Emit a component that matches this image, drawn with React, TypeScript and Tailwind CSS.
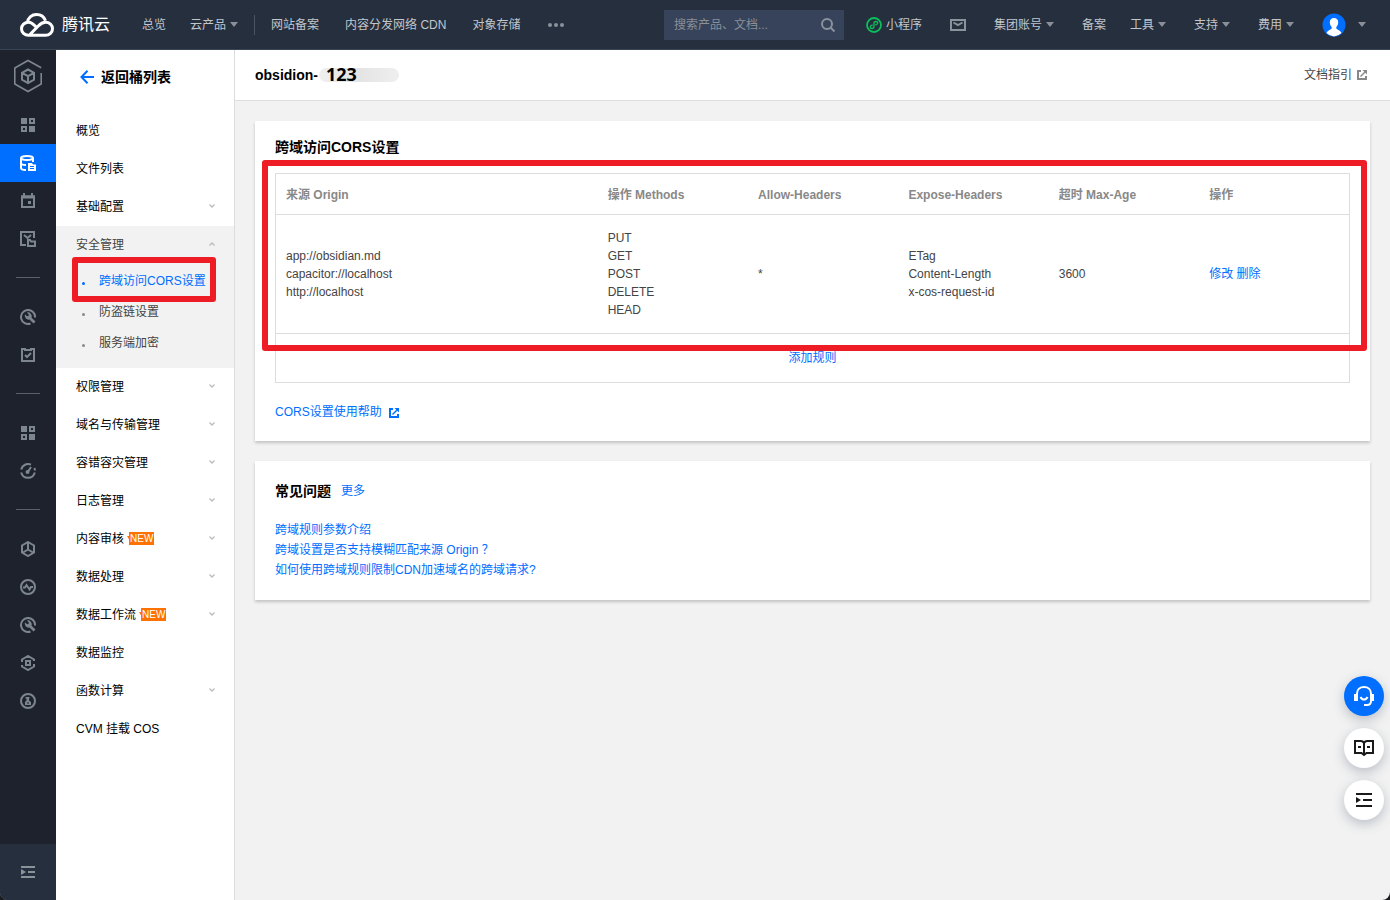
import React from 'react';
import clsx from 'clsx';

type IconName =
  | 'grid'
  | 'bucket'
  | 'calendar'
  | 'image'
  | 'wrench'
  | 'task'
  | 'gauge'
  | 'cube'
  | 'pulse'
  | 'hex'
  | 'lab'
  | 'indent';

interface MenuItem {
  label: string;
  expandable?: boolean;
  open?: boolean;
  isNew?: boolean;
  children?: { label: string; active?: boolean }[];
}

const railGroups: { icon: IconName; title: string; active?: boolean }[][] = [
  [
    { icon: 'grid', title: '概览' },
    { icon: 'bucket', title: '存储桶列表', active: true },
    { icon: 'calendar', title: '日志' },
    { icon: 'image', title: '数据万象' },
  ],
  [
    { icon: 'wrench', title: '工具' },
    { icon: 'task', title: '任务' },
  ],
  [
    { icon: 'grid', title: '应用' },
    { icon: 'gauge', title: '监控' },
  ],
  [
    { icon: 'cube', title: '资源包' },
    { icon: 'pulse', title: '诊断' },
    { icon: 'wrench', title: '工具箱' },
    { icon: 'hex', title: '服务' },
    { icon: 'lab', title: '实验室' },
  ],
];

const menuItems: MenuItem[] = [
  { label: '概览' },
  { label: '文件列表' },
  { label: '基础配置', expandable: true },
  {
    label: '安全管理',
    expandable: true,
    open: true,
    children: [
      { label: '跨域访问CORS设置', active: true },
      { label: '防盗链设置' },
      { label: '服务端加密' },
    ],
  },
  { label: '权限管理', expandable: true },
  { label: '域名与传输管理', expandable: true },
  { label: '容错容灾管理', expandable: true },
  { label: '日志管理', expandable: true },
  { label: '内容审核', expandable: true, isNew: true },
  { label: '数据处理', expandable: true },
  { label: '数据工作流', expandable: true, isNew: true },
  { label: '数据监控' },
  { label: '函数计算', expandable: true },
  { label: 'CVM 挂载 COS' },
];

const rules = [
  {
    origins: ['app://obsidian.md', 'capacitor://localhost', 'http://localhost'],
    methods: ['PUT', 'GET', 'POST', 'DELETE', 'HEAD'],
    allowHeaders: ['*'],
    exposeHeaders: ['ETag', 'Content-Length', 'x-cos-request-id'],
    maxAge: 3600,
  },
];

const faqs = [
  '跨域规则参数介绍',
  '跨域设置是否支持模糊匹配来源 Origin ？',
  '如何使用跨域规则限制CDN加速域名的跨域请求?',
];

const iconShapes: Record<IconName, React.ReactNode> = {
  grid: (
    <>
      <path fill="currentColor" stroke="none" d="M1 1h6v6H1zM9 9h6v6H9z" />
      <path d="M10 2h4v4h-4zM2 10h4v4H2z" />
    </>
  ),
  bucket: (
    <>
      <ellipse cx="7" cy="3" rx="6" ry="2" />
      <path d="M1 3v10c0 1.200 2 2 5 2M13 3v4M1 8c0 1.200 2 2 5 2" />
      <path fill="currentColor" stroke="none" fillRule="evenodd" d="M8 8h4l1 1.500h3V16H8zM10 11v1h4v-1zM10 13v1h4v-1z" />
    </>
  ),
  calendar: (
    <>
      <path d="M2 3.500h12V14H2z" />
      <path strokeWidth="3" d="M1 4h14" />
      <path d="M4 0v4M12 0v4" />
      <path fill="currentColor" stroke="none" d="M8 8h3v3H8z" />
    </>
  ),
  image: (
    <>
      <path d="M6 14H1V1h13v6" />
      <path d="M4 4l3.500 3L11 4" />
      <path d="M8 9h2l1 1.500h4V15H8z" />
    </>
  ),
  wrench: (
    <>
      <path d="M10.500 14.500A7 7 0 1 1 15 8.500" />
      <path
        fill="currentColor"
        stroke="none"
        d="M5 5.200l2 2 1.500-.3.300-1.500-1.900-1.900a4 4 0 0 1 4.700 5.200l3.900 3.900-2 2-4-4A4 4 0 0 1 5 5.200z"
      />
    </>
  ),
  task: (
    <>
      <path d="M5 2H2v12h12V2h-3" />
      <path d="M5 1v2h6V1M5 8l2 2 4-4" />
    </>
  ),
  gauge: (
    <>
      <path d="M1.200 6.500A7 7 0 0 1 11 1.700M14.300 5A7 7 0 0 1 15 7.500M1.200 9.500a7 7 0 0 0 13.600 0" />
      <path d="M7.500 9.500L11 4" />
      <circle cx="7.500" cy="9" r="1" fill="currentColor" />
    </>
  ),
  cube: (
    <>
      <path d="M8 1l6 3.500v7L8 15l-6-3.500v-7z" />
      <path d="M8 2v6.500M8 8.500l-5 3M8 8.500l5 3" />
    </>
  ),
  pulse: (
    <>
      <circle cx="8" cy="8" r="7" />
      <path d="M3 8.500h2L6.500 6l3 4.500L11 8h2" />
    </>
  ),
  hex: (
    <>
      <path d="M2 7V4.500L8 1l6 3.500V6M14 9v2.500L8 15l-6-3.500V10" />
      <path d="M6 6h4v4H6z" />
    </>
  ),
  lab: (
    <>
      <circle cx="8" cy="8" r="7" />
      <path
        fill="currentColor"
        stroke="none"
        fillRule="evenodd"
        d="M5.500 4h4v1.500H9v2l2 1.500v3H5V9l1.500-1.500v-2h-1zM7 9.500h2v1H7z"
      />
    </>
  ),
  indent: (
    <>
      <path d="M1 3h14M8 8h7M1 13h14" />
      <path fill="currentColor" stroke="none" d="M1 5l5 3-5 3z" />
    </>
  ),
};

const Icon: React.FC<{ name: IconName; className?: string }> = ({ name, className }) => (
  <svg viewBox="0 0 16 16" fill="none" stroke="currentColor" strokeWidth="2" className={clsx('h-4 w-4', className)}>
    {iconShapes[name]}
  </svg>
);

const Caret = () => (
  <svg viewBox="0 0 8 5" className="h-[5px] w-2 fill-[#8a8f98]">
    <path d="M0 0h8L4 5z" />
  </svg>
);

const ExternalIcon: React.FC<{ className?: string }> = ({ className }) => (
  <svg viewBox="0 0 10 10" fill="none" stroke="currentColor" strokeWidth="2" className={clsx('h-[10px] w-[10px]', className)}>
    <path d="M4 1H1v8h8V6" />
    <path strokeWidth="1.500" d="M3.500 6.500L8.500 1.500" />
    <path fill="currentColor" stroke="none" d="M5.500 0H10v4.500z" />
  </svg>
);

const NavLink: React.FC<{ label: string; caret?: boolean }> = ({ label, caret }) => (
  <a href="#" className="flex items-center gap-1 whitespace-nowrap">
    {label}
    {caret && <Caret />}
  </a>
);

const TopBar = () => (
  <header className="flex h-[50px] shrink-0 items-center border-b border-[#3a4554] bg-[#262f3e] pr-6 pl-5 text-[#c1c6cd]">
    <a href="#" className="flex items-center gap-2 text-base whitespace-nowrap text-white">
      <svg viewBox="0 0 34 24" fill="none" stroke="currentColor" strokeWidth="3" className="h-6 w-[34px]">
        <path d="M7.500 9.500C8 4.500 12 1.500 16.500 1.500c4.300 0 7.700 2.500 9 6.300" />
        <path d="M16.500 14.500C14 11.500 11.500 9.200 8.500 9.200c-4 0-7 3-7 6.600 0 3.700 3 6.500 7 6.500h17c4 0 7-3 7-6.600s-3-6.500-7-6.500c-3 0-5 1.300-7.500 4L10 21.500" />
      </svg>
      腾讯云
    </a>
    <nav className="ml-8 flex items-center">
      <NavLink label="总览" />
      <div className="ml-6">
        <NavLink label="云产品" caret />
      </div>
      <span className="mx-4 h-5 w-px bg-[#4a5361]" />
      <div className="flex items-center gap-[26px]">
        <NavLink label="网站备案" />
        <NavLink label="内容分发网络 CDN" />
        <NavLink label="对象存储" />
        <button aria-label="更多产品" className="ml-[2px] flex gap-[2px]">
          <span className="h-1 w-1 rounded-full bg-[#8a929b]" />
          <span className="h-1 w-1 rounded-full bg-[#8a929b]" />
          <span className="h-1 w-1 rounded-full bg-[#8a929b]" />
        </button>
      </div>
    </nav>

    <div className="ml-auto flex items-center">
      <div className="flex h-[30px] w-[180px] items-center bg-[#36435a] pr-2 pl-[10px]">
        <input
          type="text"
          aria-label="搜索"
          placeholder="搜索产品、文档..."
          className="min-w-0 flex-1 bg-transparent placeholder:text-[#8a8f98] focus:outline-none"
        />
        <svg viewBox="0 0 16 16" fill="none" stroke="#8a929b" strokeWidth="2" className="h-4 w-4">
          <circle cx="7" cy="7" r="5" />
          <path d="M10.500 10.500l4 4" />
        </svg>
      </div>
      <a href="#" className="ml-[22px] flex items-center gap-1 whitespace-nowrap">
        <svg viewBox="0 0 16 16" fill="none" stroke="#0abf5b" className="h-4 w-4">
          <circle cx="8" cy="8" r="7" strokeWidth="1.800" />
          <path
            strokeWidth="1.300"
            strokeLinecap="round"
            d="M6.300 8.200c-1.300.2-2 .9-2 1.700 0 1 .8 1.600 1.800 1.600 1.200 0 1.900-.8 1.900-1.900V6.400c0-1.100.7-1.900 1.900-1.900 1 0 1.800.6 1.800 1.600 0 .8-.7 1.500-2 1.700"
          />
        </svg>
        小程序
      </a>
      <button aria-label="消息" className="ml-7">
        <svg viewBox="0 0 16 12" fill="none" stroke="#8a929b" strokeWidth="2" className="h-3 w-4">
          <path d="M1 1h14v10H1z" />
          <path d="M3.500 3.500L8 6l4.500-2.500" />
        </svg>
      </button>
      <div className="ml-7 flex items-center gap-7">
        <NavLink label="集团账号" caret />
        <div className="flex items-center gap-6">
          <NavLink label="备案" />
          <NavLink label="工具" caret />
        </div>
        <NavLink label="支持" caret />
        <NavLink label="费用" caret />
        <button aria-label="账号" className="flex items-center gap-3">
          <svg viewBox="0 0 24 24" className="h-6 w-6">
            <circle cx="12" cy="12" r="11.500" fill="#006eff" />
            <path
              fill="#fff"
              d="M12 5c2.600 0 4.200 1.700 4.200 4.300 0 2.100-.8 3.700-1.900 4.600v1.400c0 1.200 4 1.800 5.200 4.700A11.400 11.400 0 0 1 12 23.500 11.400 11.400 0 0 1 4.500 20c1.200-2.900 5.200-3.500 5.200-4.700v-1.400c-1.100-.9-1.900-2.500-1.900-4.600C7.800 6.700 9.400 5 12 5z"
            />
          </svg>
          <Caret />
        </button>
      </div>
    </div>
  </header>
);

const Rail = () => (
  <aside className="flex w-14 shrink-0 flex-col bg-[#1e222d] text-[#7d868f]">
    <div className="flex h-14 items-center justify-center pb-1">
      <svg viewBox="0 0 30 34" fill="none" stroke="currentColor" strokeWidth="1.600" className="h-[34px] w-[30px]">
        <path d="M28.200 14v11L15 32.500 1.800 25V9L15 1.500l13.200 7.300" />
        <path strokeWidth="2" d="M15 10.500l6 3.300v6.800l-6 3.400-6-3.400v-6.800zM9 13.800l6 3.400 6-3.400M15 17.200V24" />
      </svg>
    </div>
    {railGroups.map((group, i) => (
      <div key={i}>
        {i > 0 && (
          <div className="flex h-10 items-center justify-center pb-[2px]">
            <hr className="w-6 border-[#5b616b]" />
          </div>
        )}
        {group.map((item, j) => (
          <button
            key={j}
            aria-label={item.title}
            className={clsx('flex h-[38px] w-full items-center justify-center', item.active && 'bg-[#006eff] text-white')}
          >
            <Icon name={item.icon} />
          </button>
        ))}
      </div>
    ))}
    <button aria-label="展开导航" className="mt-auto flex h-14 items-center justify-center bg-[#262f3e] text-[#88939a]">
      <Icon name="indent" />
    </button>
  </aside>
);

const NewBadge = () => (
  <span className="relative ml-[5px] h-[13px] bg-[#ff7200] px-px text-[10px] leading-[13px] text-white">
    <svg viewBox="0 0 3 5" className="absolute top-1 -left-[2px] h-[5px] w-[3px] fill-[#ff7200]">
      <path d="M0 0h3v5z" />
    </svg>
    NEW
  </span>
);

const SideMenu = () => (
  <nav className="w-[179px] shrink-0 border-r border-[#dddddd] bg-white text-black">
    <a href="#" className="flex h-[62px] items-center gap-[7px] pb-2 pl-6 text-sm font-bold">
      <svg viewBox="0 0 14 14" fill="none" stroke="#006eff" strokeWidth="2" className="h-[14px] w-[14px]">
        <path d="M14 7H1.500M7.500 .8L1.500 7l6 6.200" />
      </svg>
      返回桶列表
    </a>
    <ul>
      {menuItems.map((item) => (
        <li key={item.label} className={clsx(item.open && 'bg-[#f2f2f2]')}>
          <a href="#" className={clsx('flex h-[38px] items-center pr-[19px] pb-px pl-5', item.open && 'text-[#444444]')}>
            {item.label}
            {item.isNew && <NewBadge />}
            {item.expandable && (
              <svg
                viewBox="0 0 6 4"
                fill="none"
                stroke="#bbbbbb"
                strokeWidth="1.300"
                className={clsx('mb-px ml-auto h-1 w-[6px]', item.open && 'rotate-180')}
              >
                <path d="M.5.500L3 3 5.500.500" />
              </svg>
            )}
          </a>
          {item.children && (
            <ul className="pt-[2px] pb-[9px]">
              {item.children.map((child) => (
                <li key={child.label} className="relative">
                  <a
                    href="#"
                    className={clsx(
                      'flex h-[31px] items-center gap-[14px] pb-[2px] pl-[26px]',
                      child.active ? 'text-[#006eff]' : 'text-[#444444]'
                    )}
                  >
                    <span className={clsx('mt-[6px] h-[3px] w-[3px] rounded-full', child.active ? 'bg-[#006eff]' : 'bg-[#888888]')} />
                    {child.label}
                  </a>
                  {child.active && (
                    <span className="pointer-events-none absolute -top-[9px] right-[18px] left-4 h-[45px] rounded-[3px] border-[6px] border-[#ee1c25]" />
                  )}
                </li>
              ))}
            </ul>
          )}
        </li>
      ))}
    </ul>
  </nav>
);

const Lines: React.FC<{ items: string[] }> = ({ items }) => (
  <>
    {items.map((item) => (
      <div key={item}>{item}</div>
    ))}
  </>
);

const CorsCard = () => (
  <section className="bg-white px-5 pt-4 pb-5 shadow-[0_2px_3px_rgba(0,0,0,0.2)]">
    <h2 className="text-sm leading-5 font-bold text-black">跨域访问CORS设置</h2>
    <div className="relative mt-4">
      <table className="w-full table-fixed border-collapse text-left leading-[18px] text-[#444444]">
        <thead className="text-[#888888]">
          <tr className="h-[41px] border border-[#dddddd]">
            <th className="w-[30%] px-[10px] pt-[2px]">来源 Origin</th>
            <th className="w-[14%] px-[10px] pt-[2px]">操作 Methods</th>
            <th className="w-[14%] px-[10px] pt-[2px]">Allow-Headers</th>
            <th className="w-[14%] px-[10px] pt-[2px]">Expose-Headers</th>
            <th className="w-[14%] px-[10px] pt-[2px]">超时 Max-Age</th>
            <th className="w-[14%] px-[10px] pt-[2px]">操作</th>
          </tr>
        </thead>
        <tbody>
          {rules.map((rule, i) => (
            <tr key={i} className="border border-[#dddddd]">
              <td className="px-[10px] py-[14px]">
                <Lines items={rule.origins} />
              </td>
              <td className="px-[10px] py-[14px]">
                <Lines items={rule.methods} />
              </td>
              <td className="px-[10px] py-[14px]">
                <Lines items={rule.allowHeaders} />
              </td>
              <td className="px-[10px] py-[14px]">
                <Lines items={rule.exposeHeaders} />
              </td>
              <td className="px-[10px] py-[14px]">{rule.maxAge}</td>
              <td className="px-[10px] py-[14px] whitespace-nowrap text-[#006eff]">
                <button>修改</button> <button>删除</button>
              </td>
            </tr>
          ))}
          <tr className="h-[49px] border border-[#dddddd]">
            <td colSpan={6} className="text-center text-[#006eff]">
              <button>添加规则</button>
            </td>
          </tr>
        </tbody>
      </table>
      <span className="pointer-events-none absolute -top-[13px] -right-[17px] bottom-8 -left-[13px] rounded-[3px] border-[6px] border-[#ee1c25]" />
    </div>
    <a href="#" className="mt-5 flex items-center gap-[7px] leading-[18px] text-[#006eff]">
      CORS设置使用帮助
      <ExternalIcon className="mt-[2px]" />
    </a>
  </section>
);

const FaqCard = () => (
  <section className="bg-white p-5 shadow-[0_2px_3px_rgba(0,0,0,0.2)]">
    <div className="flex items-center gap-[10px] leading-5">
      <h2 className="text-sm leading-5 font-bold text-black">常见问题</h2>
      <a href="#" className="text-[#006eff]">
        更多
      </a>
    </div>
    <ul className="mt-[19px] leading-5 text-[#006eff]">
      {faqs.map((faq) => (
        <li key={faq}>
          <a href="#">{faq}</a>
        </li>
      ))}
    </ul>
  </section>
);

const FloatingTools = () => (
  <div className="fixed right-[6px] bottom-20 flex flex-col gap-3 text-[#1a1a1a]">
    <button
      aria-label="在线客服"
      className="flex h-10 w-10 items-center justify-center rounded-full bg-[#006eff] text-white shadow-[0_4px_12px_rgba(55,72,100,0.3)]"
    >
      <svg viewBox="0 0 20 20" fill="none" stroke="currentColor" strokeWidth="2" className="h-5 w-5">
        <path d="M3 9V7.500C3 3.500 6 1 10 1s7 2.500 7 6.500V15c0 2.500-1.500 4-4 4h-3" />
        <path fill="currentColor" stroke="none" d="M0 8h4v7H0zM16 8h4v7h-4z" />
        <path d="M6.500 11c.8 1.800 2 2.500 3.500 2.500s2.700-.7 3.500-2.500" />
      </svg>
    </button>
    <button
      aria-label="文档"
      className="flex h-10 w-10 items-center justify-center rounded-full bg-white shadow-[0_4px_12px_rgba(55,72,100,0.3)]"
    >
      <svg viewBox="0 0 20 18" fill="none" stroke="currentColor" strokeWidth="2" className="h-[18px] w-5">
        <path d="M10 4C9.300 2.800 8.500 2 7 2H1v12h6.500L10 16l2.500-2H19V2h-6c-1.500 0-2.300.8-3 2zM10 4v12M4 8h3M13 8h3" />
      </svg>
    </button>
    <button
      aria-label="收起"
      className="flex h-10 w-10 items-center justify-center rounded-full bg-white shadow-[0_4px_12px_rgba(55,72,100,0.3)]"
    >
      <svg viewBox="0 0 16 14" fill="none" stroke="currentColor" strokeWidth="2" className="h-[14px] w-4">
        <path d="M0 1h16M7 7h9M0 13h16" />
        <path fill="currentColor" stroke="none" d="M0 4l5 3-5 3z" />
      </svg>
    </button>
  </div>
);

const App: React.FC = () => {
  return (
    <div className="bg-[#1c1c1e] font-['Liberation_Sans','Noto_Sans_CJK_SC',sans-serif] text-xs">
      <div className="flex min-h-screen flex-col overflow-hidden rounded-b-lg bg-[#f2f2f2]">
        <TopBar />
        <div className="flex flex-1">
          <Rail />
          <SideMenu />
          <main className="min-w-0 flex-1">
            <div className="flex h-[51px] items-center justify-between border-b border-[#dddddd] bg-white pr-[23px] pl-5">
              <h1 className="flex items-center text-sm font-bold text-black">
                obsidion-
                <span className="ml-px flex h-[14px] w-20 items-center rounded-full bg-linear-to-r from-[#efefef] via-[#e4e4e4] to-[#efefef] pb-[2px] pl-[7px] font-['Open_Sans',sans-serif] text-lg">
                  123
                </span>
              </h1>
              <a href="#" className="flex items-center gap-[5px] text-[#444444]">
                文档指引
                <ExternalIcon className="text-[#888888]" />
              </a>
            </div>
            <div className="flex flex-col gap-5 p-5">
              <CorsCard />
              <FaqCard />
            </div>
          </main>
        </div>
        <FloatingTools />
      </div>
    </div>
  );
};

export default App;
